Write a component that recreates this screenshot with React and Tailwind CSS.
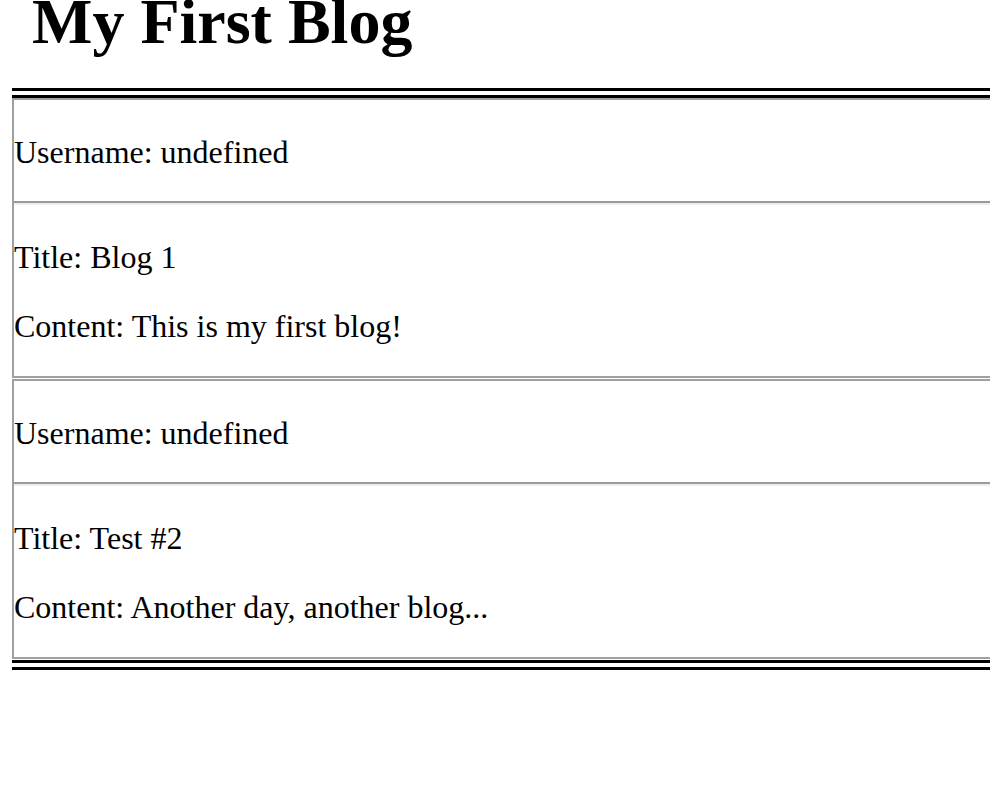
export default function App() {
  const posts = [
    { title: "Blog 1", content: "This is my first blog!" },
    { title: "Test #2", content: "Another day, another blog..." },
  ];
  const pCls = "my-[32px] h-[37px] pt-[3px] text-[32px] leading-[34px]";
  return (
    <div
      className="min-h-screen w-[990px] overflow-hidden bg-white text-black"
      style={{ fontFamily: '"Liberation Serif", "Times New Roman", serif' }}
    >
      <h1 className="mt-[-10px] mb-[34px] pl-[32px] text-[64px] font-bold leading-[64px]">
        My First Blog
      </h1>
      <div className="ml-[12px] w-[1100px] border-y-[10px] border-double border-black">
        {posts.map((p, i) => (
          <div key={i} className="mb-px border-2 border-[#a0a0a0]">
            <p className={pCls}>Username: undefined</p>
            <div className="h-[4px] border-t-2 border-b-2 border-t-[#9a9a9a] border-b-[#eeeeee]" />
            <p className={pCls}>Title: {p.title}</p>
            <p className="mt-[32px] mb-[33px] h-[37px] pt-[3px] text-[32px] leading-[34px]">
              Content: {p.content}
            </p>
          </div>
        ))}
      </div>
    </div>
  );
}
